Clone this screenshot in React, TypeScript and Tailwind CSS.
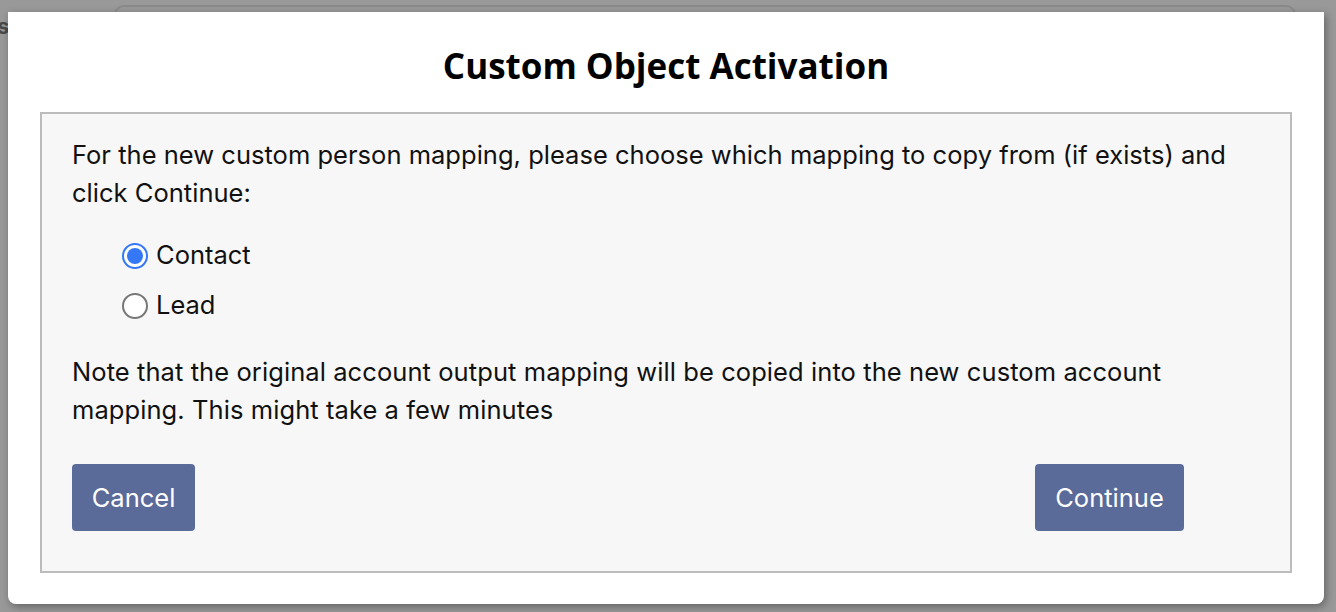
import { useState } from "react"

export default function App() {
    const [source, setSource] = useState("contact")

    const options = [
        { id: "contact", label: "Contact" },
        { id: "lead", label: "Lead" },
    ]

    return (
        <div className="relative h-[612px] w-[1336px] overflow-hidden bg-[#999999] font-['Inter',sans-serif]">

            {/* page behind the overlay */}
            <div className="absolute left-[114px] top-[5px] h-[80px] w-[1182px] rounded-[10px] border-2 border-[#8a8a8a]" />
            <div className="absolute left-[-3px] top-[10px] text-[22px] font-bold text-[#4a4a4a]">
                s
            </div>

            {/* modal */}
            <div className="absolute left-[8px] top-[12px] flex h-[592px] w-[1316px] flex-col rounded-b-[8px] bg-white shadow-[2px_3px_8px_rgba(0,0,0,0.35)]">

                <h1 className="flex h-[100px] items-center justify-center pt-[8px] font-['Open_Sans',sans-serif] text-[35px] font-bold text-black">
                    Custom Object Activation
                </h1>

                <div className="mx-[32px] flex h-[461px] flex-col border-2 border-[#bcbcbc] bg-[#f7f7f7] pl-[30px] pt-[22px] text-[25.5px] leading-[38px] text-[#111]">

                    <p className="w-[1180px] tracking-[0.02px]">
                        For the new custom person mapping, please choose which mapping to copy from (if exists) and click Continue:
                    </p>

                    <div className="mt-[19px] flex flex-col pl-[50px]">
                        {options.map((option) => (
                            <label
                                key={option.id}
                                className="flex h-[50px] cursor-pointer items-center gap-[8px]"
                                onClick={() => setSource(option.id)}
                            >
                                {source === option.id ? (
                                    <span className="flex h-[26px] w-[26px] items-center justify-center rounded-full border-2 border-[#3478f6] bg-white">
                                        <span className="h-[16px] w-[16px] rounded-full bg-[#3478f6]" />
                                    </span>
                                ) : (
                                    <span className="h-[26px] w-[26px] rounded-full border-2 border-[#777] bg-white" />
                                )}
                                <span className="-mt-[2px]">{option.label}</span>
                            </label>
                        ))}
                    </div>

                    <p className="mt-[22px] w-[1180px] tracking-[0.08px]">
                        Note that the original account output mapping will be copied into the new custom account mapping. This might take a few minutes
                    </p>

                    <div className="mt-[35px] flex w-[1112px] justify-between">
                        <button className="h-[67px] w-[123px] rounded-[4px] bg-[#5a6a99] text-[25.5px] text-white">
                            Cancel
                        </button>
                        <button className="h-[67px] w-[149px] rounded-[4px] bg-[#5a6a99] text-[25.5px] text-white">
                            Continue
                        </button>
                    </div>

                </div>

            </div>
        </div>
    )
}
